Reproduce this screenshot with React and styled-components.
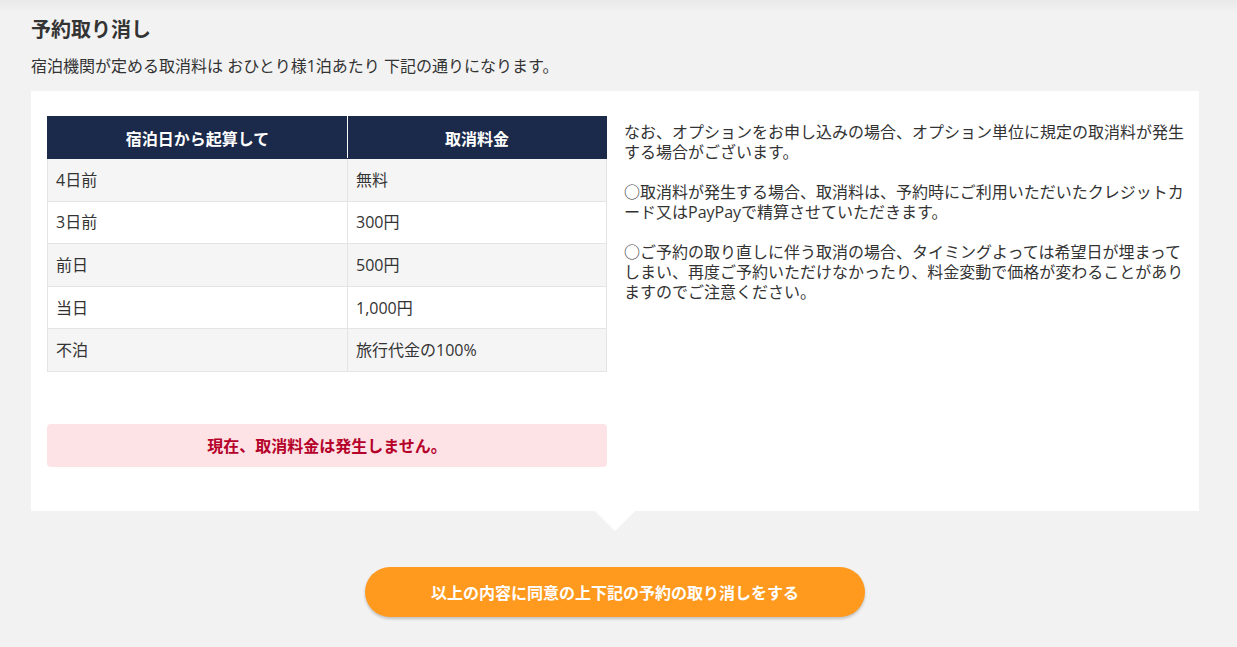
import React from "react";
import styled, { createGlobalStyle } from "styled-components";

const GlobalStyle = createGlobalStyle`
  body {
    margin: 0;
    background: #f2f2f2;
    font-family: "Open Sans", "Noto Sans CJK JP", sans-serif;
    color: #333333;
  }
`;

const rows = [
  ["4日前", "無料"],
  ["3日前", "300円"],
  ["前日", "500円"],
  ["当日", "1,000円"],
  ["不泊", "旅行代金の100%"],
];

export default function App() {
  return (
    <>
      <GlobalStyle />
      <Page>
        <Title>予約取り消し</Title>
        <Lead>宿泊機関が定める取消料は おひとり様1泊あたり 下記の通りになります。</Lead>
        <Panel>
          <LeftColumn>
            <FeeTable>
              <thead>
                <tr>
                  <Th>宿泊日から起算して</Th>
                  <Th>取消料金</Th>
                </tr>
              </thead>
              <tbody>
                {rows.map(([day, fee], i) => (
                  <Row key={day} $striped={i % 2 === 0}>
                    <Td>{day}</Td>
                    <Td>{fee}</Td>
                  </Row>
                ))}
              </tbody>
            </FeeTable>
            <Notice>現在、取消料金は発生しません。</Notice>
          </LeftColumn>
          <Notes>
            <p>なお、オプションをお申し込みの場合、オプション単位に規定の取消料が発生する場合がございます。</p>
            <p>○取消料が発生する場合、取消料は、予約時にご利用いただいたクレジットカード又はPayPayで精算させていただきます。</p>
            <p>○ご予約の取り直しに伴う取消の場合、タイミングよっては希望日が埋まってしまい、再度ご予約いただけなかったり、料金変動で価格が変わることがありますのでご注意ください。</p>
          </Notes>
        </Panel>
        <ButtonRow>
          <CancelButton>以上の内容に同意の上下記の予約の取り消しをする</CancelButton>
        </ButtonRow>
      </Page>
    </>
  );
}

const Page = styled.div`
  padding: 16px 38px 30px 31px;
  background: linear-gradient(#e9e9e9 0px, #f2f2f2 12px);
  min-height: 647px;
  box-sizing: border-box;
`;

const Title = styled.h1`
  margin: 0;
  font-size: 20px;
  font-weight: 700;
  line-height: 28px;
  color: #333333;
`;

const Lead = styled.p`
  margin: 10px 0 0;
  font-size: 16px;
  line-height: 24px;
`;

const Panel = styled.div`
  position: relative;
  margin-top: 13px;
  background: #ffffff;
  display: flex;
  gap: 17px;
  padding: 25px 9px 44px 16px;

  &::after {
    content: "";
    position: absolute;
    left: 50%;
    bottom: -20px;
    transform: translateX(-50%);
    border-left: 20px solid transparent;
    border-right: 20px solid transparent;
    border-top: 20px solid #ffffff;
  }
`;

const LeftColumn = styled.div`
  width: 560px;
  flex-shrink: 0;
  display: flex;
  flex-direction: column;
  gap: 52px;
`;

const FeeTable = styled.table`
  width: 100%;
  border-collapse: collapse;
  table-layout: fixed;
  font-size: 16px;
`;

const Th = styled.th`
  background: #1b2a4a;
  color: #ffffff;
  font-weight: 700;
  font-size: 16px;
  height: 41px;
  padding: 0 8px;
  border: 1px solid #1b2a4a;
  border-right-color: #ffffff;
  &:first-child {
    width: 283px;
  }
  &:last-child {
    border-right-color: #1b2a4a;
  }
`;

const Row = styled.tr`
  background: ${(p) => (p.$striped ? "#f5f5f5" : "#ffffff")};
`;

const Td = styled.td`
  border: 1px solid #e4e4e4;
  height: 41.6px;
  padding: 0 8px;
  line-height: 20px;
  color: #333333;
`;

const Notice = styled.div`
  background: #fde3e5;
  border-radius: 4px;
  height: 43px;
  display: flex;
  align-items: center;
  justify-content: center;
  color: #b5002a;
  font-weight: 700;
  font-size: 16px;
`;

const Notes = styled.div`
  flex: 1;
  padding-top: 6px;
  font-size: 16px;
  line-height: 20px;
  color: #333333;
  p {
    margin: 0 0 20px;
  }
`;

const ButtonRow = styled.div`
  display: flex;
  justify-content: center;
  margin-top: 56px;
`;

const CancelButton = styled.button`
  width: 500px;
  height: 50px;
  border: none;
  border-radius: 25px;
  background: #ff9a1f;
  color: #ffffff;
  font-family: "Open Sans", "Noto Sans CJK JP", sans-serif;
  font-size: 16px;
  font-weight: 700;
  box-shadow: 0 2px 3px rgba(0, 0, 0, 0.2);
  cursor: pointer;
`;
